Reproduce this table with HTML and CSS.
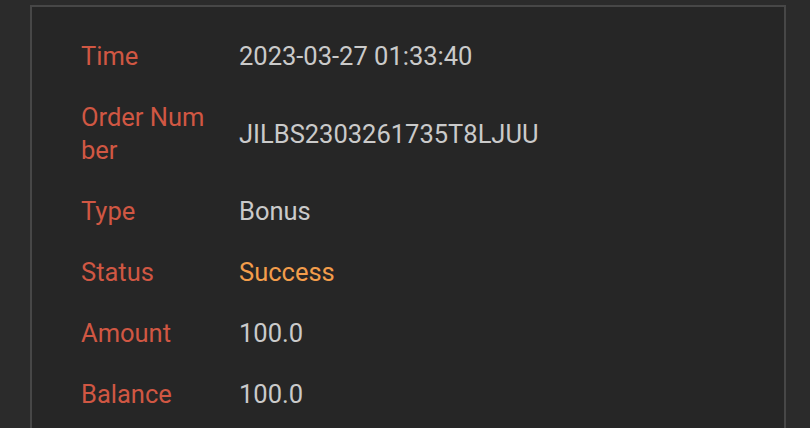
FILE: index.html
```html
<!DOCTYPE html>
<html lang="en">
<head>
  <meta charset="UTF-8">
  <meta name="viewport" content="width=device-width, initial-scale=1.0">
  <title>Order Detail</title>
  <link rel="stylesheet" href="styles.css">
</head>
<body>
  <div class="detail-card">
    <div class="detail-row">
      <div class="detail-label">Time</div>
      <div class="detail-value">2023-03-27 01:33:40</div>
    </div>
    <div class="detail-row">
      <div class="detail-label">Order Number</div>
      <div class="detail-value">JILBS2303261735T8LJUU</div>
    </div>
    <div class="detail-row">
      <div class="detail-label">Type</div>
      <div class="detail-value">Bonus</div>
    </div>
    <div class="detail-row">
      <div class="detail-label">Status</div>
      <div class="detail-value success">Success</div>
    </div>
    <div class="detail-row">
      <div class="detail-label">Amount</div>
      <div class="detail-value">100.0</div>
    </div>
    <div class="detail-row">
      <div class="detail-label">Balance</div>
      <div class="detail-value">100.0</div>
    </div>
  </div>
</body>
</html>
```

FILE: styles.css
```css
html, body {
  height: 100%;
}

body {
  font-family: Roboto, "Liberation Sans", sans-serif;
  margin: 0;
  padding: 5px 24px 0 30px;
  background-color: #2b2b2b;
  box-sizing: border-box;
  overflow: hidden;
}

.detail-card {
  background-color: #262626;
  border: 2px solid #474747;
  border-bottom: none;
  padding: 19px 0 0 49px;
  min-height: 100%;
  box-sizing: border-box;
}

.detail-row {
  display: flex;
  align-items: center;
  padding: 14px 0;
  font-size: 25.5px;
  line-height: 33px;
}

.detail-label {
  width: 128px;
  margin-right: 30px;
  flex-shrink: 0;
  color: #d05743;
  word-break: break-all;
}

.detail-value {
  color: #cacaca;
}

.detail-value.success {
  color: #f39d4b;
}
```
